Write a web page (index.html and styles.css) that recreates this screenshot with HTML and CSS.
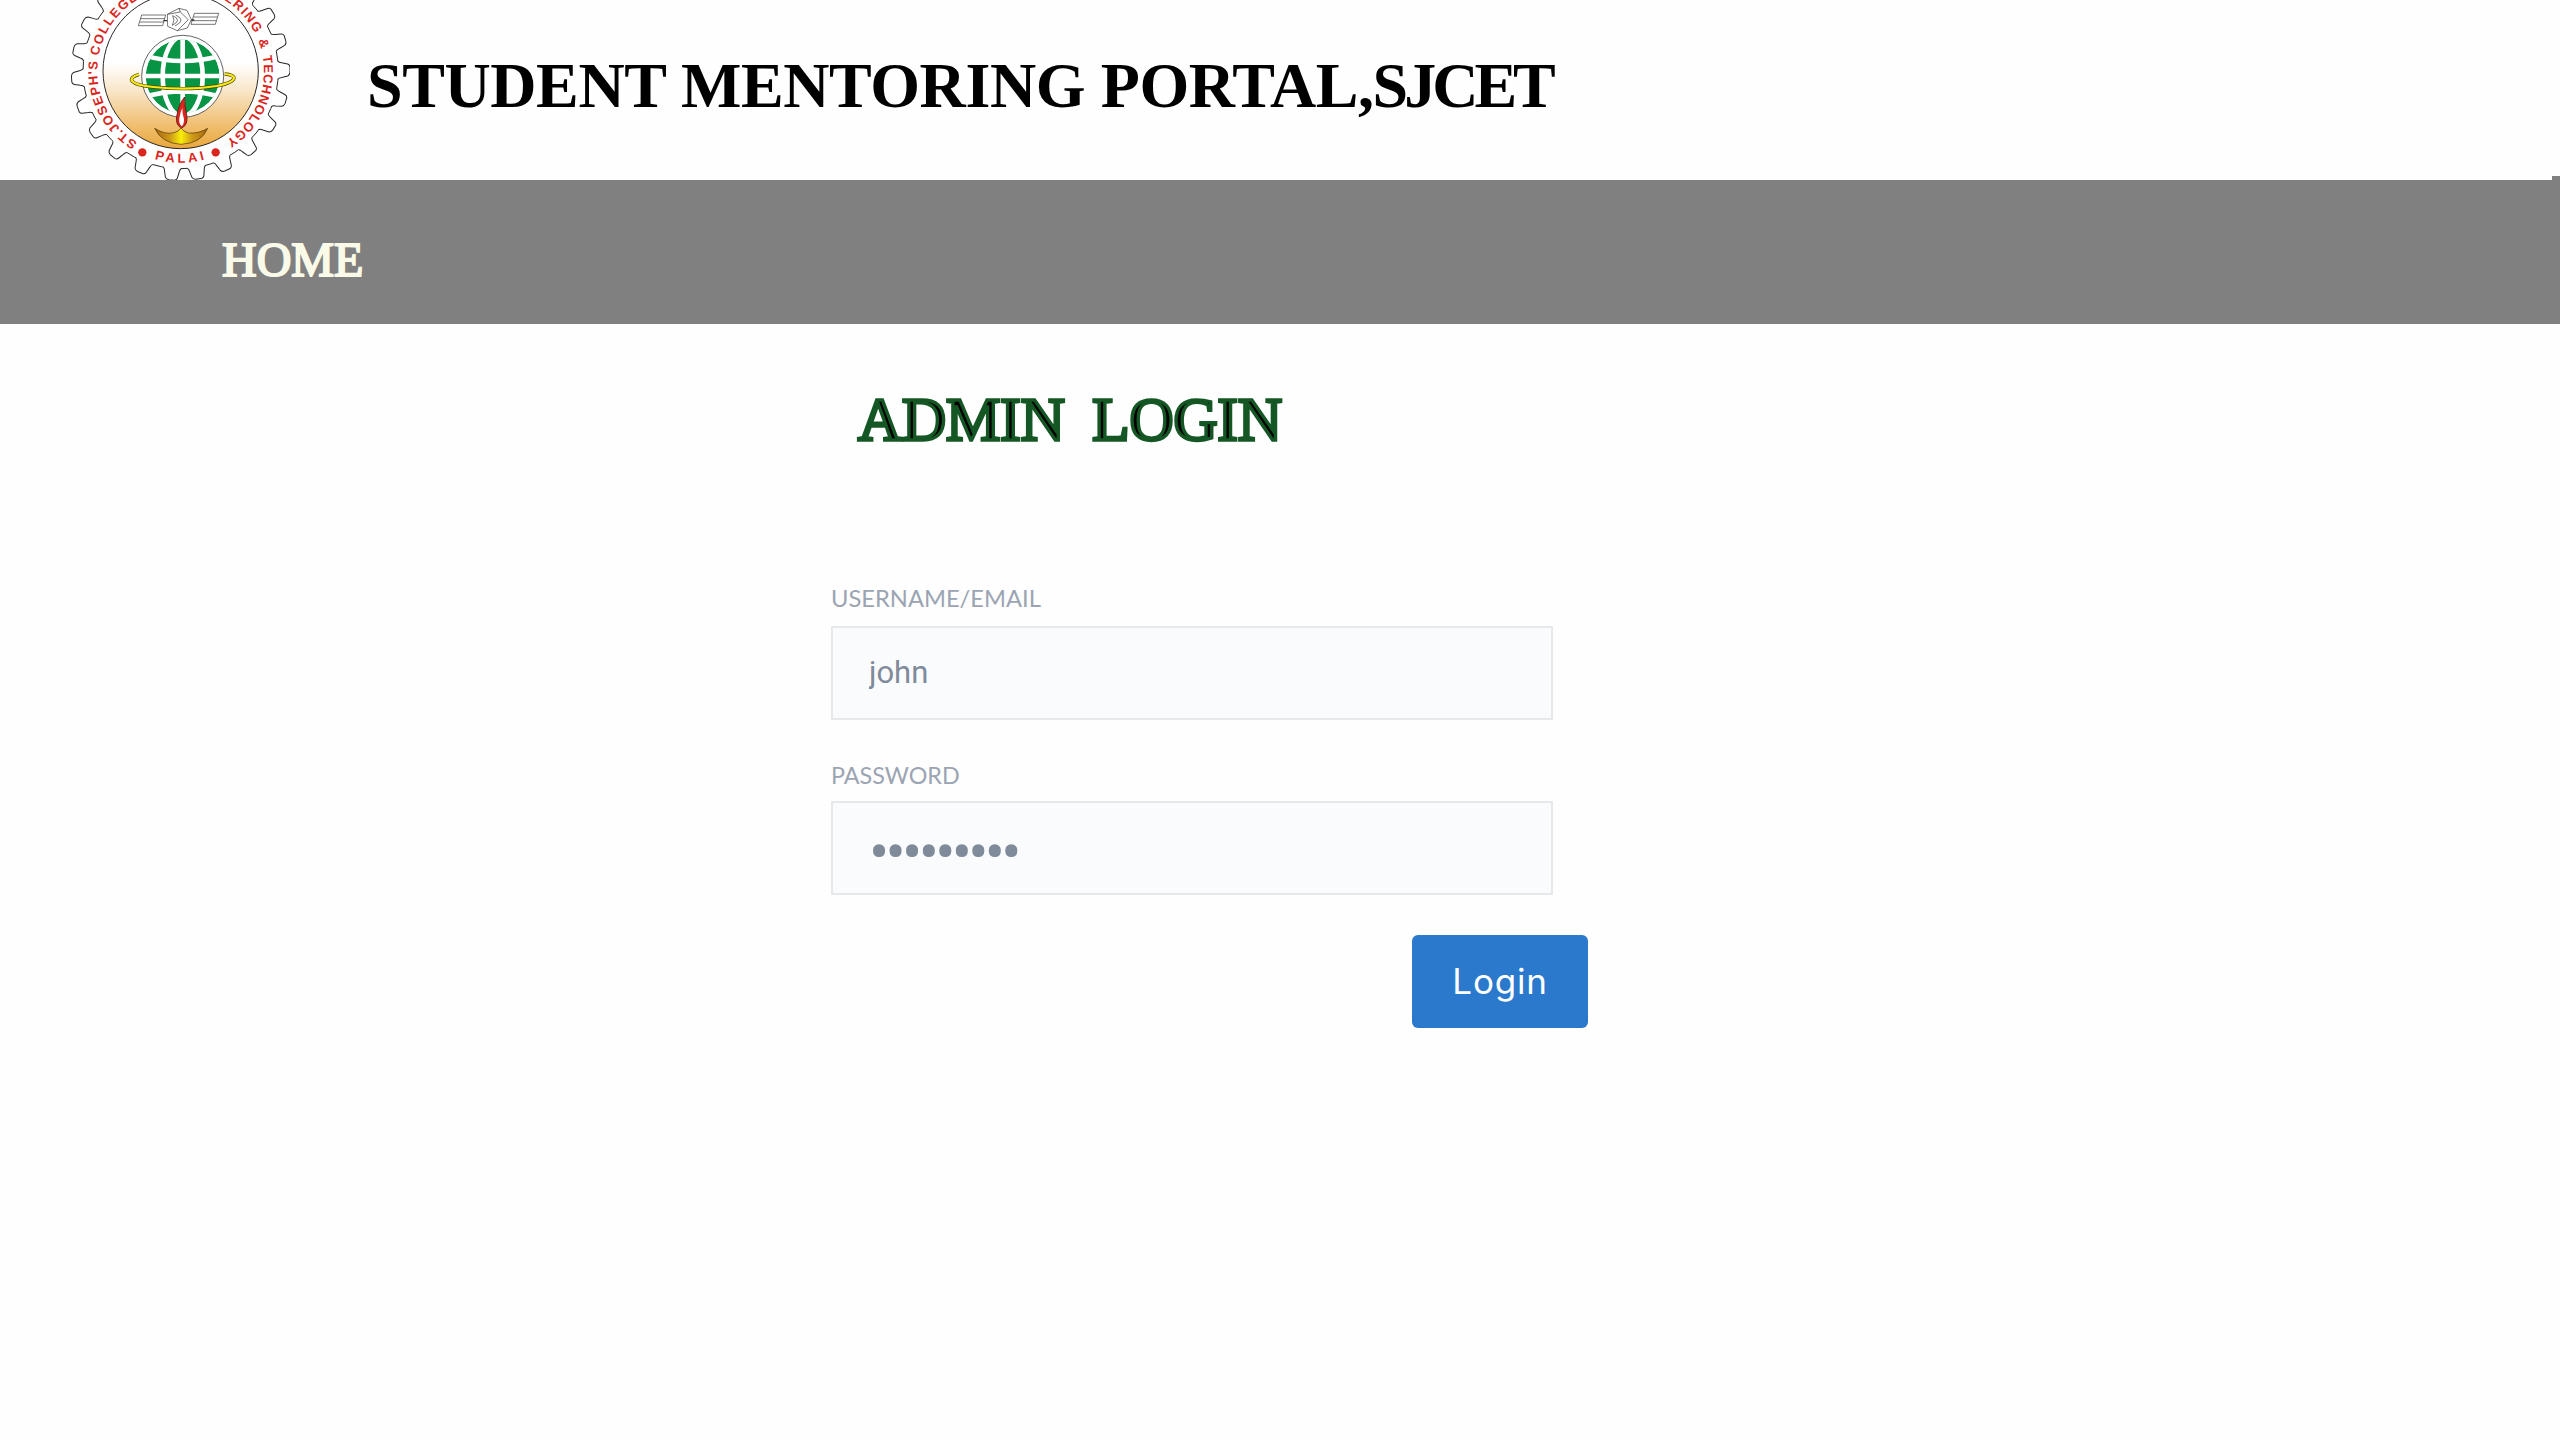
FILE: index.html
```html
<!DOCTYPE html>
<html lang="en">
<head>
<meta charset="utf-8">
<title>Student Mentoring Portal</title>
<link rel="stylesheet" href="styles.css">
</head>
<body>
<header class="header">
  <svg class="logo" viewBox="0 0 780 540" role="img" aria-label="St. Joseph's College of Engineering and Technology, Palai">
    <defs>
      <linearGradient id="sand" x1="0" y1="0" x2="0" y2="1">
        <stop offset="0.45" stop-color="#fff"/>
        <stop offset="0.62" stop-color="#f9e7cb"/>
        <stop offset="0.82" stop-color="#f1c47c"/>
        <stop offset="1" stop-color="#e9a73a"/>
      </linearGradient>
      <linearGradient id="brass">
        <stop offset="0" stop-color="#a8650f"/>
        <stop offset="0.3" stop-color="#cf9c18"/>
        <stop offset="0.5" stop-color="#f9ee0a"/>
        <stop offset="0.7" stop-color="#cf9c18"/>
        <stop offset="1" stop-color="#a8650f"/>
      </linearGradient>
      <clipPath id="globe"><circle cx="398" cy="229" r="111"/></clipPath>
      <clipPath id="frame"><rect width="720" height="540"/></clipPath>
      <path id="arc" d="M392 463A250 250 0 0 1 392 -37A250 250 0 0 1 392 463"/>
      <path id="arc-low" d="M117 213A275 275 0 0 0 667 213"/>
      <g id="tooth">
        <path d="M-26 286V293L-16 325H16L26 293V286Z" fill="#fff"/>
        <path d="M-27 292Q-23 294-22 303L-18 321Q-15 327-7 328L11 328Q17 326 18 321L22 303Q23 295 27 292" fill="none" stroke="#2b2626" stroke-width="3"/>
      </g>
    </defs>
    <g clip-path="url(#frame)">
      <circle cx="392" cy="213" r="293" fill="#fff" stroke="#2b2626" stroke-width="3"/>
      <g transform="translate(392 213)">
        <use href="#tooth" transform="rotate(5)"/><use href="#tooth" transform="rotate(-9.3)"/>
        <use href="#tooth" transform="rotate(-25)"/><use href="#tooth" transform="rotate(-41.5)"/>
        <use href="#tooth" transform="rotate(-58.5)"/><use href="#tooth" transform="rotate(-74)"/>
        <use href="#tooth" transform="rotate(-90.5)"/><use href="#tooth" transform="rotate(-107)"/>
        <use href="#tooth" transform="rotate(-122.5)"/><use href="#tooth" transform="rotate(-138)"/>
        <use href="#tooth" transform="rotate(22)"/><use href="#tooth" transform="rotate(38.7)"/>
        <use href="#tooth" transform="rotate(54.7)"/><use href="#tooth" transform="rotate(70)"/>
        <use href="#tooth" transform="rotate(86)"/><use href="#tooth" transform="rotate(101.5)"/>
        <use href="#tooth" transform="rotate(117)"/><use href="#tooth" transform="rotate(133)"/>
      </g>
      <circle cx="392" cy="213" r="233" fill="url(#sand)" stroke="#2b2626" stroke-width="3"/>
      <g class="seal-text">
        <text><textPath href="#arc" startOffset="136" textLength="286">ST.JOSEPH'S</textPath></text>
        <text><textPath href="#arc" startOffset="438" textLength="214">COLLEGE</textPath></text>
        <text><textPath href="#arc" startOffset="672" textLength="388">OF ENGINEERING</textPath></text>
        <text><textPath href="#arc" startOffset="1083">&amp;</textPath></text>
        <text><textPath href="#arc" startOffset="1132" textLength="294">TECHNOLOGY</textPath></text>
        <text><textPath href="#arc-low" startOffset="352" textLength="152">PALAI</textPath></text>
      </g>
      <circle cx="277" cy="457" r="12.5" fill="#da251d"/>
      <circle cx="497" cy="457" r="12.5" fill="#da251d"/>
      <g fill="#fff" stroke="#333" stroke-width="2">
        <path d="M275 45H347L338 77H265ZM272 56H344M269 66H341"/>
        <path d="M433 40H506L496 73H423ZM430 51H502M427 62H499"/>
        <path d="M340 62H352M423 60H433" stroke-width="4"/>
        <path d="M352 43L387 25L411 31L424 59L412 84L382 92L353 79Z"/>
        <path d="M387 25L391 36L415 59L382 92M391 36L352 43M368 47Q398 60 367 76Q376 61 368 47ZM377 45Q410 60 375 78" fill="none"/>
      </g>
      <circle cx="398" cy="229" r="123" fill="#fff" stroke="#444" stroke-width="2.5"/>
      <g clip-path="url(#globe)">
        <circle cx="398" cy="229" r="111" fill="#079545"/>
        <g fill="none" stroke="#fff" stroke-width="14">
          <path d="M398 110V350M280 228H520M285 167Q398 199 511 167M285 290Q398 258 511 290"/>
          <ellipse cx="398" cy="229" rx="60" ry="120"/>
        </g>
      </g>
      <path d="M267 223C228 235 238 254 310 261C370 267 445 267 500 258C570 244 560 224 524 222" fill="none" stroke="#4b4600" stroke-width="10"/>
      <path d="M267 223C228 235 238 254 310 261C370 267 445 267 500 258C570 244 560 224 524 222" fill="none" stroke="#f7e915" stroke-width="6.5"/>
      <path d="M314 385Q345 405 372 398Q388 394 393 384Q398 394 415 399Q445 402 473 385Q455 430 393 433Q335 430 314 385Z" fill="url(#brass)" stroke="#4d3508" stroke-width="2"/>
      <path d="M404 291Q403 316 411 350Q413 376 395 384Q376 376 380 350Q385 313 404 291Z" fill="#da251d" stroke="#5c1512" stroke-width="2.5"/>
      <path d="M397 324Q396 340 402 358Q402 374 395 379Q386 371 388 355Q391 336 397 324Z" fill="#fff"/>
    </g>
  </svg>
  <h1 class="title">STUDENT MENTORING PORTAL,<span class="title-college">SJCET</span></h1>
  <span class="scroll-tip"></span>
</header>
<nav class="nav"><a class="nav-link">HOME</a></nav>
<main class="main">
  <h2 class="heading">ADMIN&nbsp; LOGIN</h2>
  <form class="form">
    <label class="label" for="user">USERNAME/EMAIL</label>
    <input class="field" id="user" type="text" value="john">
    <label class="label label-password" for="pass">PASSWORD</label>
    <input class="field field-password" id="pass" type="password" value="mentoring">
    <button class="button" type="button">Login</button>
  </form>
</main>
</body>
</html>
```
FILE: styles.css
```css
* { box-sizing: border-box; }
body { margin: 0; min-height: 1440px; background: #fefefe; font-family: Lato, sans-serif; }
.header { position: relative; display: flex; height: 180px; padding-left: 50px; background: #fefefe; }
.logo { width: 260px; height: 180px; flex: none; }
.seal-text { font: bold 39px "Liberation Sans", sans-serif; fill: #da251d; }
.title {
  margin: 49px 0 0 57px;
  font: bold 64px/73px "Liberation Serif", serif;
  letter-spacing: -0.4px;
  white-space: nowrap;
  color: #000;
}
.title-college { margin-left: -1px; letter-spacing: -4px; }
.scroll-tip { position: absolute; right: 0; bottom: 0; width: 8px; height: 4px; background: #808080; }
.nav { height: 144px; padding: 53px 0 0 222px; background: #808080; }
.nav-link {
  display: block;
  font: 48px/54px "Liberation Serif", serif;
  color: #fafae8;
  -webkit-text-stroke: 2px #fafae8;
}
.main { padding: 61px 0 0 831px; }
.heading {
  margin: 0 0 0 27px;
  font: 61px/70px "Liberation Serif", serif;
  word-spacing: -1.5px;
  color: #000;
  -webkit-text-stroke: 3.4px #155724;
}
.form { display: flex; flex-direction: column; width: 757px; padding-top: 129px; }
.label { font-size: 23.7px; line-height: 28px; color: #9ba4b3; margin-bottom: 14px; }
.label-password { margin: 41px 0 12px; font-size: 23.3px; }
.field {
  width: 722px;
  height: 94px;
  padding: 0 0 2px 36px;
  border: 2px solid #e6e8ec;
  border-radius: 0;
  background: #fafbfd;
  font: 31px Roboto, sans-serif;
  color: #7f8a9a;
}
.field-password { padding: 9px 0 0 36px; font-size: 60px; letter-spacing: -3.7px; }
.button {
  align-self: flex-end;
  width: 176px;
  height: 93px;
  margin-top: 40px;
  padding: 0 0 2px;
  border: 0;
  border-radius: 6px;
  background: #2b79cc;
  font: 35px Inter, sans-serif;
  letter-spacing: 0.8px;
  color: #fff;
}
```
